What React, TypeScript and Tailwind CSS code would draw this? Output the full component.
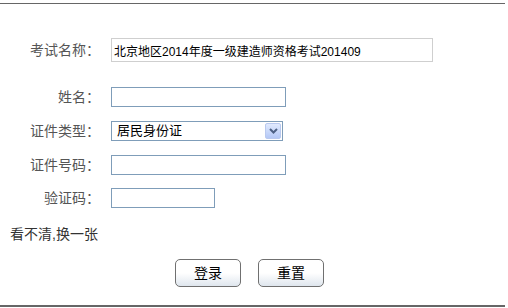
const font = "font-['Liberation_Sans','Noto_Sans_CJK_SC',sans-serif]";

const Label = ({ text }: { text: string }) => (
  <div className="w-[100px] shrink-0 text-right text-[14px] leading-4 text-[#555]">{text}</div>
);

const Field = ({ w }: { w: string }) => (
  <input
    className={`${w} h-[20px] border border-[#7f9db9] bg-white px-1 text-[12px] outline-none`}
    type="text"
  />
);

const Button = ({ text }: { text: string }) => (
  <button className="h-[28px] w-[66px] rounded-[5px] border border-[#707070] bg-gradient-to-b from-white via-white to-[#dfe6ee] text-[14px] text-black">
    {text}
  </button>
);

export default function App() {
  return (
    <div className={`w-[508px] h-[308px] bg-white pt-[3px] ${font}`}>
      <div className="h-px w-[505px] bg-[#666]" />

      <div className="flex flex-col pt-[34px]">
        <div className="flex items-center gap-[11px]">
          <Label text="考试名称：" />
          <input
            readOnly
            value="北京地区2014年度一级建造师资格考试201409"
            className="h-[24px] w-[322px] border border-[#cfcfcf] bg-white px-[2px] text-[12px] text-black outline-none"
          />
        </div>

        <div className="mt-[25px] flex items-center gap-[11px]">
          <Label text="姓名：" />
          <Field w="w-[175px]" />
        </div>

        <div className="mt-[14px] flex items-center gap-[11px]">
          <Label text="证件类型：" />
          <div className="flex h-[20px] w-[172px] items-center border border-[#7f9db9] bg-white pl-[5px] pr-px">
            <span className="flex-1 text-[13px] leading-4 text-black">居民身份证</span>
            <span className="flex h-[16px] w-[16px] items-center justify-center rounded-[2px] border border-[#b9c9ef] bg-gradient-to-b from-[#e1eafe] to-[#b4c8f6]">
              <svg width="9" height="6" viewBox="0 0 9 6">
                <path d="M1 1 L4.5 4.5 L8 1" fill="none" stroke="#4d6185" strokeWidth="2" />
              </svg>
            </span>
          </div>
        </div>

        <div className="mt-[14px] flex items-center gap-[11px]">
          <Label text="证件号码：" />
          <Field w="w-[175px]" />
        </div>

        <div className="mt-[13px] flex items-center gap-[11px]">
          <Label text="验证码：" />
          <Field w="w-[104px]" />
        </div>

        <div className="mt-[18px] pl-[10px] text-[14px] leading-4 text-[#333]">看不清,换一张</div>

        <div className="mt-[17px] flex gap-[17px] pl-[175px]">
          <Button text="登录" />
          <Button text="重置" />
        </div>
      </div>

      <div className="mt-[18px] h-[2px] w-[505px] bg-[#666]" />
    </div>
  );
}
